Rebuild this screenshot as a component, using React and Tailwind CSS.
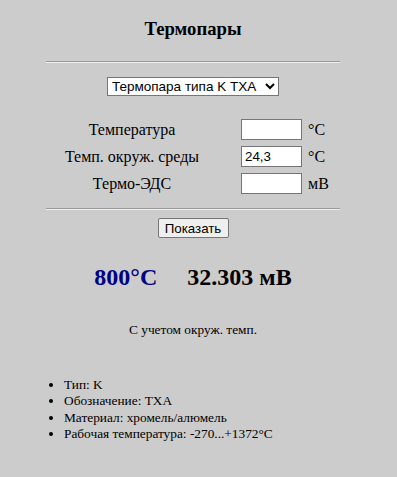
export default function App() {
  const serif = "font-['Liberation_Serif','Times_New_Roman',serif]";
  const sans = "font-['Liberation_Sans',Arial,sans-serif]";
  const rows = [
    { label: "Температура", value: "", unit: "°C" },
    { label: "Темп. окруж. среды", value: "24,3", unit: "°C" },
    { label: "Термо-ЭДС", value: "", unit: "мВ" },
  ];
  return (
    <div className={`min-h-[477px] w-[397px] bg-[#cccccc] text-black ${serif}`}>
      <div className="flex w-[386px] flex-col items-center">
        <h3 className="mt-[18px] text-[18.72px] leading-[22px] font-bold">Термопары</h3>
        <div className="mt-[21px] h-0 w-[294px] border-t border-b border-t-[#9a9a9a] border-b-[#eeeeee]" />
        <select
          defaultValue="k"
          className={`mt-[14px] h-[19px] w-[172px] border border-[#767676] bg-white pl-0 text-[13.5px] leading-[16px] text-black ${sans}`}
        >
          <option value="k">Термопара типа K ТХА</option>
        </select>
        <div className="mt-[23px] flex w-full flex-col gap-[6px]">
          {rows.map((r) => (
            <div key={r.label} className="flex h-[21px] items-center">
              <div className="ml-[47px] w-[170px] text-center text-[16px]">{r.label}</div>
              <input
                defaultValue={r.value}
                className={`ml-[24px] h-[21px] w-[61px] border border-[#767676] bg-white px-[3px] text-[13.33px] text-black ${sans}`}
              />
              <div className="ml-[6px] text-[16px]">{r.unit}</div>
            </div>
          ))}
        </div>
        <div className="mt-[14px] h-0 w-[294px] border-t border-b border-t-[#9a9a9a] border-b-[#eeeeee]" />
        <button
          className={`mt-[8px] h-[20px] w-[71px] rounded-[2px] border border-[#767676] bg-[#efefef] text-[13.33px] leading-[15px] text-black ${sans}`}
        >
          Показать
        </button>
        <div className="mt-[26px] flex gap-[30px] text-[24px] leading-[27.6px] font-bold">
          <span className="text-[#000080]">800°C</span>
          <span>32.303 мВ</span>
        </div>
        <div className="mt-[30px] text-[13.33px] leading-[15.3px]">С учетом окруж. темп.</div>
        <ul className="mt-[40px] ml-[24px] list-disc self-start pl-[40px] text-[13.33px] leading-[16.5px]">
          <li>Тип: K</li>
          <li>Обозначение: ТХА</li>
          <li>Материал: хромель/алюмель</li>
          <li>Рабочая температура: -270...+1372°C</li>
        </ul>
      </div>
    </div>
  );
}
